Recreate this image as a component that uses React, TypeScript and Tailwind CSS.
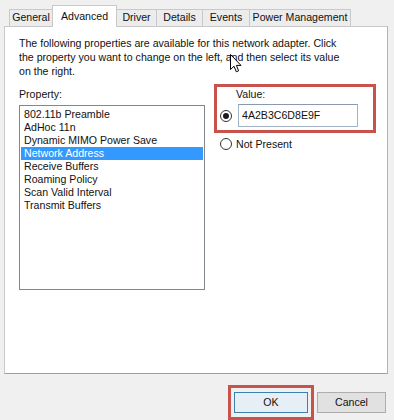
import React from "react";

const tabs = [
  { label: "General", w: "w-[44px]" },
  { label: "Advanced", w: "w-[65px]", active: true },
  { label: "Driver", w: "w-[41px]" },
  { label: "Details", w: "w-[47px]" },
  { label: "Events", w: "w-[48px]" },
  { label: "Power Management", w: "w-[102px]" },
];

const properties = [
  "802.11b Preamble",
  "AdHoc 11n",
  "Dynamic MIMO Power Save",
  "Network Address",
  "Receive Buffers",
  "Roaming Policy",
  "Scan Valid Interval",
  "Transmit Buffers",
];

function Radio({ checked }: { checked?: boolean }) {
  return (
    <span className="flex h-[12px] w-[12px] shrink-0 items-center justify-center rounded-full border border-[#333] bg-white">
      {checked ? <span className="h-[6px] w-[6px] rounded-full bg-[#1a1a1a]" /> : null}
    </span>
  );
}

export default function App() {
  return (
    <div
      className="relative h-[420px] w-[394px] overflow-hidden bg-[#f0f0f0] text-[10.6px] text-[#111]"
      style={{ fontFamily: '"Liberation Sans", Arial, sans-serif' }}
    >
      {/* tab strip */}
      <div className="flex h-[26px] items-end pl-[10px] pt-[5px]">
        {tabs.map((t) =>
          t.active ? (
            <div
              key={t.label}
              className={`relative z-10 -mb-px -ml-px flex h-[22px] items-start justify-center border border-b-0 border-[#c9c9c9] bg-white pt-[3px] ${t.w}`}
            >
              {t.label}
            </div>
          ) : (
            <div
              key={t.label}
              className={`-ml-px flex h-[17px] items-center justify-center border border-b-0 border-[#c9c9c9] bg-[#ececec] ${t.w}`}
            >
              {t.label}
            </div>
          )
        )}
      </div>

      {/* page */}
      <div className="ml-[4px] h-[348px] w-[384px] border border-[#c9c9c9] border-b-[#a0a0a0] border-r-[#b4b4b4] bg-white">
        <p className="pl-[14px] pt-[9px] leading-[14px]">
          The following properties are available for this network adapter. Click
          <br />
          the property you want to change on the left, and then select its value
          <br />
          on the right.
        </p>

        <div className="mt-[6px] flex pl-[14px]">
          <div className="w-[186px] pt-[3px]">
            <div className="leading-[14px]">Property:</div>
            <div className="mt-[4px] h-[185px] border border-[#828790] bg-white px-[1px] pt-[2px]">
              {properties.map((p) => (
                <div
                  key={p}
                  className={`h-[13px] pl-[3px] leading-[13px] ${
                    p === "Network Address" ? "bg-[#3399ff] text-white" : ""
                  }`}
                >
                  {p}
                </div>
              ))}
            </div>
          </div>

          <div className="ml-[9px] flex flex-col">
            <div className="w-[162px] border-[3px] border-[#c8534d] pb-[3px] pr-[15px]">
              <div className="pl-[19px] leading-[14px]">Value:</div>
              <div className="mt-[3px] flex items-center pl-[3px]">
                <Radio checked />
                <div className="ml-[6px] flex h-[23px] flex-1 items-center border border-[#a3b3c6] border-t-[#8a9aae] pl-[3px]">
                  4A2B3C6D8E9F
                </div>
              </div>
            </div>
            <div className="mt-[4px] flex h-[14px] items-center pl-[6px]">
              <Radio />
              <span className="ml-[4px] leading-[14px]">Not Present</span>
            </div>
          </div>
        </div>
      </div>

      {/* buttons */}
      <div className="mt-[11px] flex items-start justify-end pr-[8px]">
        <div className="border-[3px] border-[#c8534d] px-[3px] pb-[4px] pt-[4px]">
          <div className="flex h-[21px] w-[74px] items-center justify-center border border-[#3c7fb1] bg-[#e6eef6]">
            OK
          </div>
        </div>
        <div className="ml-[3px] mt-[7px] flex h-[21px] w-[69px] items-center justify-center border border-[#adadad] bg-[#e1e1e1]">
          Cancel
        </div>
      </div>

      {/* mouse pointer */}
      <svg
        className="absolute left-[230px] top-[54px]"
        width="12"
        height="19"
        viewBox="0 0 12 19"
      >
        <path
          d="M0.5 0.5 L0.5 15.5 L4 12.2 L6.3 17.8 L8.6 16.8 L6.4 11.4 L11 11.4 Z"
          fill="white"
          stroke="black"
          strokeWidth="1"
          strokeLinejoin="round"
        />
      </svg>
    </div>
  );
}
